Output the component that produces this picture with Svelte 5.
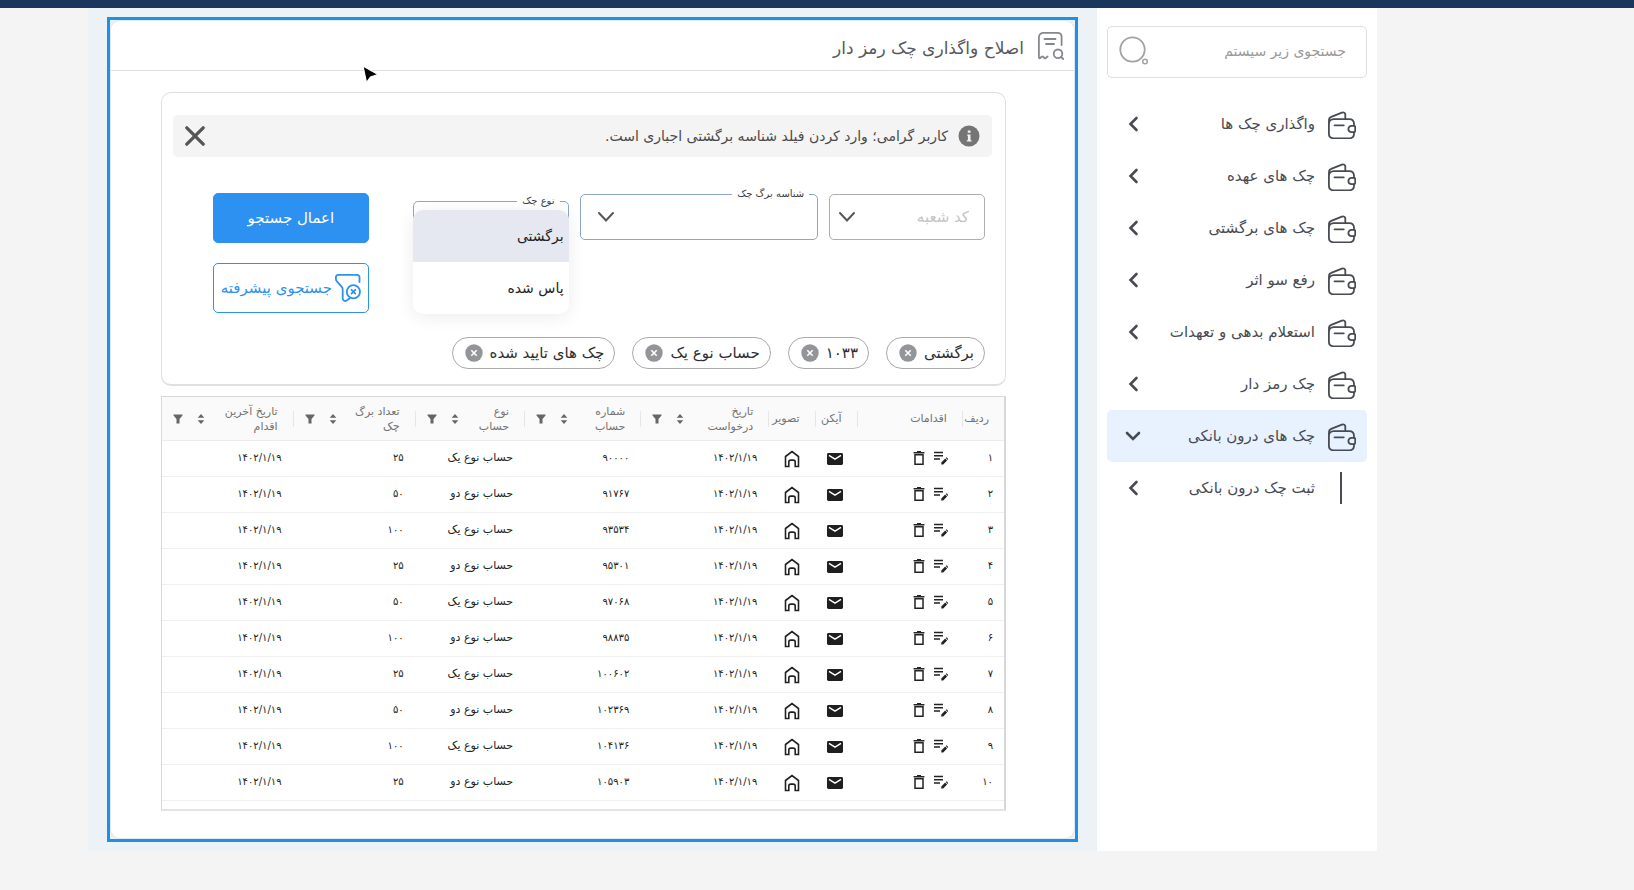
<script>
  const menu = ['واگذاری چک ها', 'چک های عهده', 'چک های برگشتی', 'رفع سو اثر', 'استعلام بدهی و تعهدات', 'چک رمز دار'];
  const chips = ['برگشتی', '۱۰۳۳', 'حساب نوع یک', 'چک های تایید شده'];
  const columns = [
    { title: ['ردیف'], width: 5 },
    { title: ['اقدامات'], width: 12.5 },
    { title: ['آیکن'], width: 5 },
    { title: ['تصویر'], width: 5.5 },
    { title: ['تاریخ', 'درخواست'], width: 15.2, tools: true },
    { title: ['شماره', 'حساب'], width: 13.8, tools: true },
    { title: ['نوع', 'حساب'], width: 13, tools: true },
    { title: ['تعداد برگ', 'چک'], width: 14.5, tools: true },
    { title: ['تاریخ آخرین', 'اقدام'], width: 15.5, tools: true }
  ];
  const fa = (n) => String(n).replace(/\d/g, (d) => '۰۱۲۳۴۵۶۷۸۹'[d]);
  const rows = Array.from({ length: 10 }, (_, i) => ({
    no: fa(i + 1),
    date: '۱۴۰۲/۱/۱۹',
    account: fa(90000 + i * 1767),
    type: i % 2 ? 'حساب نوع دو' : 'حساب نوع یک',
    leaves: fa([25, 50, 100][i % 3])
  }));
</script>

{#snippet wallet()}
  <svg class="wallet" viewBox="0 0 28 28" width="28" height="28" fill="none" stroke="currentColor" stroke-width="1.8" stroke-linecap="round" stroke-linejoin="round" aria-hidden="true">
    <path d="M26 14.5V13c0-3-1.800-4.800-4.800-4.800H5.800C2.800 8.200.9 10 .9 13v9.500c0 3 1.900 4.800 4.900 4.800h15.400c3 0 4.800-1.800 4.800-4.800v-1.300" />
    <path d="M1 11.500V9.200c0-1.700.6-2.700 2.200-3.300l10.700-4.300c1.800-.7 3.400.2 3.400 2v4.200" />
    <path d="M27.200 15.900v3.800c0 .8-.6 1.500-1.500 1.500h-2.200c-1.700 0-3-1.200-3.100-2.900-.1-2 1.400-3.500 3.100-3.500h2.300c.9 0 1.400.6 1.400 1.100z" />
    <path d="M6.500 14.300h9.300" />
  </svg>
{/snippet}

<div class="topbar"></div>
<div class="page" dir="rtl">
  <aside>
    <label class="search">
      <input type="search" placeholder="جستجوی زیر سیستم" aria-label="جستجوی زیر سیستم" />
      <svg viewBox="0 0 30 30" width="30" height="30" fill="none" stroke="#a2a2a2" aria-hidden="true">
        <circle cx="13.500" cy="13.500" r="12.200" stroke-width="1.800" />
        <circle cx="26" cy="25.500" r="2.300" stroke-width="1.500" />
      </svg>
    </label>
    <nav>
      {#each menu as item}
        <a href="#menu">
          {@render wallet()}
          <span>{item}</span>
          <svg class="chev" viewBox="0 0 16 16" width="16" height="16" aria-hidden="true"><path d="M11.500 2 5.500 8l6 6" /></svg>
        </a>
      {/each}
      <a href="#menu" class="active">
        {@render wallet()}
        <span>چک های درون بانکی</span>
        <svg class="chev" viewBox="0 0 16 16" width="16" height="16" aria-hidden="true"><path d="M2 5l6 6 6-6" /></svg>
      </a>
      <a href="#menu">
        <i class="bar"></i>
        <span>ثبت چک درون بانکی</span>
        <svg class="chev" viewBox="0 0 16 16" width="16" height="16" aria-hidden="true"><path d="M11.500 2 5.500 8l6 6" /></svg>
      </a>
    </nav>
  </aside>

  <main>
    <div class="frame">
      <section class="panel">
        <header>
          <svg viewBox="0 0 26 28" width="26" height="28" fill="none" stroke="#85898f" stroke-width="1.800" stroke-linecap="round" stroke-linejoin="round" aria-hidden="true">
            <path d="M23.600 13V5c0-2.600-1.500-4.100-4.100-4.100H5.600C2.600.9.900 2.500.9 5.500v20c0 .8.7 1 1.300.5l1.400-1.200c.6-.5 1.200-.5 1.700 0l1.200 1.200c.4.4.9.4 1.300 0l1.800-1.500" />
            <path d="M6.500 7h11M8 12h8" />
            <circle cx="20" cy="21.800" r="4.300" /><path d="m23.200 25 2 2" />
          </svg>
          <h1>اصلاح واگذاری چک رمز دار</h1>
        </header>

        <form class="filters" onsubmit={(e) => e.preventDefault()}>
          <div class="notice">
            <svg viewBox="0 0 22 22" width="22" height="22" aria-hidden="true">
              <circle cx="11" cy="11" r="10.500" fill="#757575" />
              <path d="M9.800 5.500h2.700v2.300H9.800zM9.200 9.500h3.300v5.800h1.100v1.200H8.800v-1.200h1.100v-4.600h-.7z" fill="#f4f4f4" />
            </svg>
            <p>کاربر گرامی؛ وارد کردن فیلد شناسه برگشتی اجباری است.</p>
            <button type="button" class="close" aria-label="بستن">
              <svg viewBox="0 0 22 22" width="20" height="22" fill="none" stroke="#555" stroke-width="3.600" stroke-linecap="round"><path d="m2 2 18 18M20 2 2 20" /></svg>
            </button>
          </div>

          <div class="fields">
            <div class="field code">
              <select aria-label="کد شعبه"><option>کد شعبه</option></select>
              <svg viewBox="0 0 18 18" width="18" height="18" aria-hidden="true"><path d="m2 5 7 7.500L16 5" /></svg>
            </div>
            <div class="field wide">
              <label for="sheet">شناسه برگ چک</label>
              <select id="sheet"><option></option></select>
              <svg viewBox="0 0 18 18" width="18" height="18" aria-hidden="true"><path d="m2 5 7 7.500L16 5" /></svg>
            </div>
            <div class="field kind">
              <label for="kind">نوع چک</label>
              <select id="kind"><option></option></select>
              <div class="dropdown">
                <button type="button" class="on">برگشتی</button>
                <button type="button">پاس شده</button>
              </div>
            </div>
            <div class="actions">
              <button type="submit" class="primary">اعمال جستجو</button>
              <button type="button" class="outline">
                <svg viewBox="0 0 26 28" width="26" height="28" fill="none" stroke="currentColor" stroke-width="1.800" stroke-linecap="round" stroke-linejoin="round" aria-hidden="true">
                  <path d="M24.500 8V3.200C24.500 1.800 23.600.9 22.200.9H3.100C1.700.9.900 1.800.9 3.200v1.600c0 1 .5 2.200 1.200 2.900l4.300 4.700c.8.9 1.300 2 1.300 3v8.800c0 2.500 2.200 3.600 4 2.200l2.800-2" />
                  <circle cx="18.400" cy="17.700" r="6.600" />
                  <path d="m16.500 15.800 3.800 3.800M20.300 15.800l-3.800 3.800" />
                </svg>
                <span>جستجوی پیشرفته</span>
              </button>
            </div>
          </div>

          <div class="chips">
            {#each chips as chip}
              <span class="chip">
                {chip}
                <button type="button" aria-label="حذف">
                  <svg viewBox="0 0 18 18" width="18" height="18" aria-hidden="true"><circle cx="9" cy="9" r="8.700" fill="#939599" /><path d="m6.300 6.300 5.400 5.400M11.700 6.300l-5.400 5.400" stroke="#fff" stroke-width="1.600" /></svg>
                </button>
              </span>
            {/each}
          </div>
        </form>

        <div class="tablebox">
          <table>
            <colgroup>
              {#each columns as c}<col style="width: {c.width}%" />{/each}
            </colgroup>
            <thead>
              <tr>
                {#each columns as c}
                  <th>
                    <div class="head">
                      <span>{#each c.title as line, i}{#if i}<br />{/if}{line}{/each}</span>
                      {#if c.tools}
                        <svg class="sort" viewBox="0 0 8 12" width="8" height="12" aria-hidden="true"><path d="M4 1 7.300 4.800H.7zM4 11 .7 7.200h6.600z" fill="#666" /></svg>
                        <svg viewBox="0 0 10 10" width="10" height="10" aria-hidden="true"><path d="M.5.500h9v1L6.500 5v4.500h-3V5l-3-3.500z" fill="#666" /></svg>
                      {/if}
                    </div>
                  </th>
                {/each}
              </tr>
            </thead>
            <tbody>
              {#each rows as r}
                <tr>
                  <td class="num">{r.no}</td>
                  <td>
                    <div class="tools">
                      <button type="button" aria-label="ویرایش">
                        <svg viewBox="0 0 14 14" width="14" height="14"><path d="M0 1.500h9M0 4.800h9M0 8.100h6" stroke="#222" stroke-width="1.500" /><path d="M7.300 13.500v-2l3.900-3.900 1.900 1.900-3.900 4zM11.800 7l.8-.7L14 7.700l.200.5-.6.7z" fill="#222" /></svg>
                      </button>
                      <button type="button" aria-label="حذف">
                        <svg viewBox="0 0 12 14" width="12" height="14" fill="none" stroke="#222"><path d="M2 3.800h8v9.400H2z" stroke-width="1.500" /><path d="M.6 1.700h10.800M4 .7h4" stroke-width="1.500" /></svg>
                      </button>
                    </div>
                  </td>
                  <td class="mid">
                    <svg viewBox="0 0 16 12" width="16" height="12" aria-hidden="true"><rect width="16" height="12" rx="1.400" fill="#1f1f1f" /><path d="m2 2.300 6 3.900 6-3.900" fill="none" stroke="#fff" stroke-width="1.400" /></svg>
                  </td>
                  <td class="mid">
                    <svg viewBox="0 0 16 18" width="18" height="18" fill="none" stroke="#222" stroke-width="1.600" stroke-linejoin="miter" aria-hidden="true"><path d="M1.500 6.500 8 1.500l6.500 5v10h-3.300v-4.500c0-1.200-.7-1.900-1.900-1.900H6.700c-1.200 0-1.900.7-1.900 1.900v4.500H1.500z" /></svg>
                  </td>
                  <td class="num">{r.date}</td>
                  <td class="num">{r.account}</td>
                  <td>{r.type}</td>
                  <td class="num">{r.leaves}</td>
                  <td class="num">{r.date}</td>
                </tr>
              {/each}
            </tbody>
          </table>
        </div>
      </section>
    </div>
    <svg class="cursor" viewBox="0 0 17 20" width="17" height="20" aria-hidden="true"><path d="m1 1 3.500 16.500 4-5.500 7.500-2.500z" fill="#000" stroke="#fff" stroke-width="1.200" /></svg>
  </main>
</div>

<style>
  :global(body) {
    background: #f4f4f4;
    font-family: 'DejaVu Sans', sans-serif;
    color: #3a3d42;
  }
  * {
    box-sizing: border-box;
  }
  button,
  input,
  select {
    font: inherit;
    color: inherit;
  }
  button {
    border: 0;
    padding: 0;
    background: none;
    cursor: pointer;
  }
  svg {
    display: block;
    flex: none;
  }
  .topbar {
    height: 8px;
    background: #1a365d;
  }
  .page {
    display: flex;
    margin: 0 257px 0 88px;
  }
  aside {
    flex: 0 0 280px;
    background: #fff;
    padding: 18px 10px;
  }
  .search {
    display: flex;
    align-items: center;
    height: 52px;
    padding: 0 20px 2px 11px;
    border: 1px solid #dedede;
    border-radius: 5px;
  }
  .search input {
    flex: 1;
    min-width: 0;
    border: 0;
    outline: 0;
    padding: 0;
    background: none;
    font-size: 14px;
  }
  .search input::placeholder {
    color: #9a9a9a;
    opacity: 1;
  }
  nav {
    margin-top: 20px;
  }
  nav a {
    display: flex;
    align-items: center;
    gap: 13px;
    height: 52px;
    padding: 0 11px 0 18px;
    border-radius: 5px;
    color: #484b52;
    font-size: 15px;
    text-decoration: none;
  }
  nav a span {
    flex: 1;
    white-space: nowrap;
  }
  nav a.active {
    background: #e7f2fe;
  }
  .wallet {
    margin-top: 2px;
  }
  .chev path {
    fill: none;
    stroke: #484b52;
    stroke-width: 2.6;
    stroke-linecap: round;
  }
  .bar {
    width: 30px;
    height: 32px;
    background: linear-gradient(#484b52, #484b52) center / 2px 100% no-repeat;
    margin-left: -2px;
  }
  main {
    position: relative;
    flex: 1;
    min-width: 0;
    padding: 9px 19px;
    background: #edf2f6;
  }
  .frame {
    border: 3px solid #1c90ea;
    background: #edf2f6;
  }
  .panel {
    padding-bottom: 27px;
    border: 1px solid #e4e6e8;
    border-radius: 10px;
    background: #fff;
  }
  header {
    display: flex;
    align-items: center;
    gap: 14px;
    height: 50px;
    padding: 0 10px;
    border-bottom: 1px solid #dedede;
  }
  h1 {
    margin: 4px 0 0;
    color: #55585c;
    font-size: 17px;
    font-weight: 400;
  }
  .filters {
    margin: 21px 68px 10px 50px;
    padding: 22px 13px 15px 11px;
    border: 1px solid #dfdfdf;
    border-bottom-width: 2px;
    border-radius: 10px;
  }
  .notice {
    display: flex;
    align-items: center;
    gap: 10px;
    height: 42px;
    padding: 0 12px;
    border-radius: 5px;
    background: #f4f4f4;
    color: #4a4a4a;
  }
  .notice p {
    flex: 1;
    margin: 0;
    font-size: 14px;
  }
  .fields {
    display: flex;
    align-items: flex-start;
    gap: 11px;
    margin: 36px 7px 0 40px;
  }
  .field {
    position: relative;
    flex: 156 1 0;
    min-width: 0;
    margin-top: 1px;
  }
  .field.wide {
    flex-grow: 239;
  }
  .field.kind {
    margin-top: 8px;
  }
  .field select {
    display: block;
    width: 100%;
    height: 46px;
    padding: 0 15px;
    border: 1px solid #8ea5cb;
    border-radius: 5px;
    appearance: none;
    background: #fff;
    font-size: 15px;
  }
  .field.code select {
    border-color: #adadad;
    color: #c4c4c4;
  }
  .field > svg {
    position: absolute;
    top: 14px;
    left: 9px;
    fill: none;
    stroke: #55585c;
    stroke-width: 2;
    stroke-linecap: round;
    pointer-events: none;
  }
  .field.wide > svg {
    left: 17px;
  }
  .field label {
    position: absolute;
    top: -8px;
    right: 9px;
    padding: 0 5px;
    background: #fff;
    font-size: 10px;
    line-height: 16px;
  }
  .dropdown {
    position: absolute;
    z-index: 1;
    top: 9px;
    left: 0;
    right: 0;
    overflow: hidden;
    border-radius: 10px;
    background: #fff;
    box-shadow: 0 3px 18px rgba(0, 0, 0, 0.08);
  }
  .dropdown button {
    display: block;
    width: 100%;
    height: 52px;
    padding: 0 5px;
    color: #222;
    font-size: 14px;
    text-align: right;
  }
  .dropdown .on {
    background: #e5e8f0;
  }
  .actions {
    display: flex;
    flex: 156 1 0;
    flex-direction: column;
    gap: 20px;
    min-width: 0;
    margin-right: 33px;
  }
  .actions button {
    display: flex;
    align-items: center;
    justify-content: center;
    gap: 3px;
    height: 50px;
    border: 1px solid #2d91f2;
    border-radius: 5px;
    color: #2d91f2;
    font-size: 15px;
    white-space: nowrap;
  }
  .actions .primary {
    background: #2d91f2;
    color: #fff;
  }
  .chips {
    display: flex;
    gap: 17px;
    margin: 24px 7px 0;
  }
  .chip {
    display: flex;
    align-items: center;
    gap: 7px;
    height: 32px;
    padding: 0 10px 0 12px;
    border: 1px solid #a9a9a9;
    border-radius: 16px;
    color: #2d2d30;
    font-size: 15px;
    white-space: nowrap;
  }
  .tablebox {
    margin: 0 68px 0 50px;
    padding-bottom: 8px;
    border: 1px solid #d8d8d8;
    border-width: 1px 2px 2px 1px;
    border-bottom-color: #e4e4e4;
  }
  table {
    width: 100%;
    border-collapse: separate;
    border-spacing: 0;
    table-layout: fixed;
  }
  th {
    height: 44px;
    padding: 0;
    border-bottom: 1px solid #ededed;
    background: #fafafa;
    color: #737373;
    font-size: 11px;
    font-weight: 400;
    line-height: 15px;
    text-align: right;
  }
  .head {
    display: flex;
    align-items: center;
    gap: 14px;
    height: 16px;
    padding: 0 15px 0 11px;
    white-space: nowrap;
  }
  .head span {
    flex: 1;
  }
  th:not(:last-child) .head {
    border-left: 1px solid #e6e6e6;
  }
  td {
    height: 36px;
    padding: 0 11px 2px;
    border-bottom: 1px solid #efefef;
    color: #222;
    font-size: 11px;
    text-align: right;
    white-space: nowrap;
  }
  td.num {
    font-size: 10px;
  }
  td.mid {
    padding: 0 14px;
  }
  .tools {
    display: flex;
    gap: 9px;
    padding-right: 3px;
  }
  .cursor {
    position: absolute;
    top: 57px;
    left: 274px;
  }
</style>
